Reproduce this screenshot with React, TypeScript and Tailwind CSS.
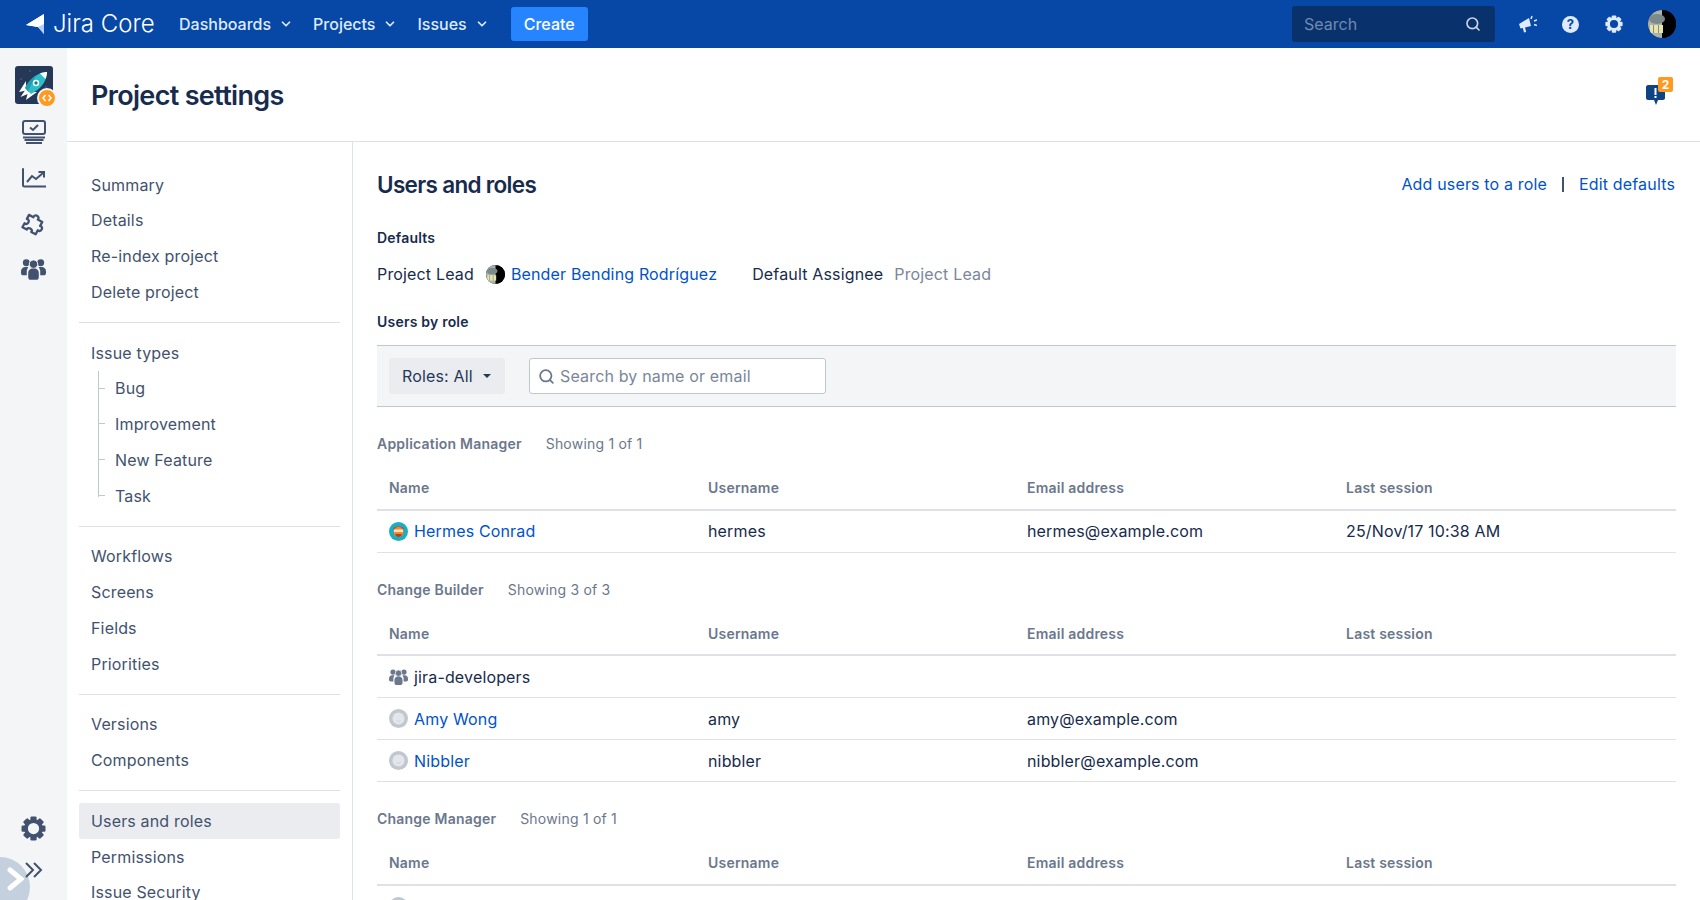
import { ChevronDown, Search } from 'lucide-react'
import type { ReactNode } from 'react'

const navGroups: string[][] = [
  ['Summary', 'Details', 'Re-index project', 'Delete project'],
  ['Issue types'],
  ['Workflows', 'Screens', 'Fields', 'Priorities'],
  ['Versions', 'Components'],
  ['Users and roles', 'Permissions', 'Issue Security'],
]
const issueTypes = ['Bug', 'Improvement', 'New Feature', 'Task']

type Member = { name: string; kind: 'hermes' | 'group' | 'blank'; username?: string; email?: string; session?: string }

const sections: { role: string; showing: string; members: Member[] }[] = [
  {
    role: 'Application Manager',
    showing: 'Showing 1 of 1',
    members: [
      { name: 'Hermes Conrad', kind: 'hermes', username: 'hermes', email: 'hermes@example.com', session: '25/Nov/17 10:38 AM' },
    ],
  },
  {
    role: 'Change Builder',
    showing: 'Showing 3 of 3',
    members: [
      { name: 'jira-developers', kind: 'group' },
      { name: 'Amy Wong', kind: 'blank', username: 'amy', email: 'amy@example.com' },
      { name: 'Nibbler', kind: 'blank', username: 'nibbler', email: 'nibbler@example.com' },
    ],
  },
  {
    role: 'Change Manager',
    showing: 'Showing 1 of 1',
    members: [{ name: '', kind: 'blank' }],
  },
]

const Gear = ({ size, color }: { size: number; color: string }) => (
  <svg width={size} height={size} viewBox="0 0 24 24" fill="none">
    {[0, 45, 90, 135, 180, 225, 270, 315].map((a) => (
      <rect key={a} x="9" y="0.5" width="6" height="5" rx="1.2" fill={color} transform={`rotate(${a} 12 12)`} />
    ))}
    <circle cx="12" cy="12" r="7.2" stroke={color} strokeWidth="3.6" />
  </svg>
)

const People = ({ size, color }: { size: number; color: string }) => (
  <svg width={size} height={size} viewBox="0 0 26 24" fill={color}>
    <circle cx="5.5" cy="6" r="3.6" />
    <circle cx="20.5" cy="6" r="3.6" />
    <path d="M0 15c0-3 2-4.6 4.5-4.6h3L6 14v5H2.4C1 19 0 18 0 16.6z" />
    <path d="M26 15c0-3-2-4.6-4.5-4.6h-3L20 14v5h3.6c1.4 0 2.4-1 2.4-2.4z" />
    <circle cx="13" cy="7.5" r="4.4" stroke="#f4f5f7" strokeWidth="1" />
    <path d="M7.5 16.5c0-2.8 2-4.5 4.5-4.5h2c2.500 0 4.500 1.700 4.500 4.500v4.500c0 1.700-1 2.700-2.700 2.700h-5.600c-1.700 0-2.700-1-2.700-2.700z" />
  </svg>
)

const Rocket = () => (
  <svg width="38" height="38" viewBox="0 0 38 38">
    <rect width="38" height="38" rx="3" fill="#253858" />
    <circle cx="6" cy="13" r="0.8" fill="#5e6c84" />
    <circle cx="15" cy="5" r="0.8" fill="#5e6c84" />
    <circle cx="31" cy="21" r="0.8" fill="#5e6c84" />
    <path d="M11 15 L4 26 L11 24.500 Z" fill="#ffffff" />
    <path d="M22 26 L11 34 L13 26 Z" fill="#ffffff" />
    <path d="M11 23 L5.500 31 L15 27 Z" fill="#ffffff" />
    <path d="M32 6 C24 6 15 12 10 22 L16 28 C26 23 32 15 32 6 Z" fill="#2bbdc9" />
    <path d="M10 22 C13 16 17 12 21 9.500 L13 25 Z" fill="#1f9eaf" />
    <path d="M32 6 C30 6 27.500 6.500 25 7.500 L30.500 13 C31.500 10.500 32 8 32 6 Z" fill="#ffffff" />
    <circle cx="21" cy="17" r="3.200" fill="#ffffff" />
    <circle cx="21" cy="17" r="1.700" fill="#0a7e8c" />
  </svg>
)

const BenderAvatar = ({ size }: { size: number }) => (
  <svg width={size} height={size} viewBox="0 0 28 28">
    <defs>
      <clipPath id={`bender-${size}`}>
        <circle cx="14" cy="14" r="14" />
      </clipPath>
    </defs>
    <g clipPath={`url(#bender-${size})`}>
      <rect width="28" height="28" fill="#000000" />
      <rect width="14" height="28" fill="#a9b3b0" />
      <ellipse cx="9" cy="9" rx="8" ry="5" fill="#7d8a8c" />
      <rect x="2" y="15" width="13" height="8" fill="#e6e3ae" />
      <rect x="5" y="15" width="1" height="8" fill="#8c8f78" />
      <rect x="10" y="15" width="1" height="8" fill="#8c8f78" />
      <path d="M16 0 C22 8 22 20 15 28 L28 28 L28 0 Z" fill="#000000" />
    </g>
  </svg>
)

const HermesAvatar = () => (
  <svg width="19" height="19" viewBox="0 0 19 19">
    <circle cx="9.500" cy="9.500" r="9.500" fill="#19aec4" />
    <path d="M4 7 C4 3.500 15 3.500 15 7 Z" fill="#d9401f" />
    <circle cx="9.500" cy="10" r="5" fill="#f58a2c" />
    <rect x="5" y="7.500" width="9" height="2.500" fill="#ffe1c0" />
    <path d="M6 12 C7 16 12 16 13 12 Z" fill="#b9401c" />
  </svg>
)

const BlankAvatar = () => (
  <svg width="19" height="19" viewBox="0 0 19 19">
    <circle cx="9.500" cy="9.500" r="9.500" fill="#c1c7d0" />
    <circle cx="9.500" cy="9.500" r="6" fill="#e3e6ea" />
    <path d="M7.500 11.500 C8.500 12.500 10.500 12.500 11.500 11.500" stroke="#c1c7d0" strokeWidth="0.6" fill="none" />
  </svg>
)

const TopLink = ({ label, className }: { label: string; className: string }) => (
  <div className={`flex items-center gap-2 font-medium ${className}`}>
    {label}
    <ChevronDown size={14} strokeWidth={3} />
  </div>
)

const NavItem = ({ children, active }: { children: ReactNode; active?: boolean }) => (
  <div className={`flex h-[35.75px] items-center rounded-[3px] pl-3 ${active ? 'bg-[#ebecf0]' : ''}`}>{children}</div>
)

function TopBar() {
  return (
    <header className="flex h-12 items-center bg-[#0747a6] pl-[26px] pr-[24px] tracking-normal text-[#deebff]">
      <svg width="19" height="20" viewBox="0 0 19 20" fill="#ffffff" className="mr-[8px]">
        <path d="M18 0 L18 20 L12 13 L0 11 Z" fill="#ffffff" />
        <path d="M18 0 L0 11 L12 13 Z" fill="#ffffff" />
        <path d="M12 13 L18 20 L18 10 Z" fill="#b3cfff" />
      </svg>
      <span className="mr-[26px] w-[100px] whitespace-nowrap text-[24px] font-light leading-none text-white">Jira Core</span>
      <TopLink label="Dashboards" className="mr-[20px]" />
      <TopLink label="Projects" className="mr-[20px]" />
      <TopLink label="Issues" className="mr-[22px]" />
      <div className="flex h-[34px] w-[77px] items-center justify-center rounded-[3px] bg-[#2684ff] font-medium text-white">
        Create
      </div>
      <div className="ml-auto flex h-9 w-[203px] items-center justify-between rounded-[3px] bg-[#09326c] pl-3 pr-[14px] text-[#6f8ab3]">
        <span>Search</span>
        <Search size={16} strokeWidth={2.5} className="text-[#c7d3e6]" />
      </div>
      <svg width="18" height="18" viewBox="0 0 18 18" fill="#deebff" className="ml-[24px]">
        <path d="M0 9 L10 3 L12 11 L6 12.500 L7.200 17 L5 17.500 L3.800 13 L1.500 13.500 Z" />
        <path d="M13 1 L12 4 M15 6 L18 5 M15 9.500 L18 10.500" stroke="#deebff" strokeWidth="1.500" />
      </svg>
      <div className="ml-[25px] flex h-[17px] w-[17px] items-center justify-center rounded-full bg-[#deebff] text-[13px] font-bold leading-none text-[#0747a6]">
        ?
      </div>
      <div className="ml-[26px]">
        <Gear size={18} color="#deebff" />
      </div>
      <div className="ml-[25px]">
        <BenderAvatar size={28} />
      </div>
    </header>
  )
}

function ProjectSidebar() {
  return (
    <aside className="relative flex w-[67px] shrink-0 flex-col items-center bg-[#f4f5f7] pt-[18px]">
      <div className="relative">
        <Rocket />
        <div className="absolute -bottom-[4px] -right-[4px] flex h-5 w-5 items-center justify-center rounded-full border-2 border-[#f4f5f7] bg-[#ff991f]">
          <svg width="10" height="8" viewBox="0 0 10 8" fill="none" stroke="#ffffff" strokeWidth="1.600">
            <path d="M3.500 1 L1 4 L3.500 7 M6.500 1 L9 4 L6.500 7" />
          </svg>
        </div>
      </div>
      <svg width="24" height="24" viewBox="0 0 24 24" fill="none" stroke="#42526e" strokeWidth="2" className="mt-[16px]">
        <rect x="1" y="1" width="22" height="13" rx="2" />
        <path d="M8 7.500 L11 10 L16 5" strokeWidth="2" />
        <path d="M1 17.500 H23 M2.500 20 H21.500 M4 23 H20" strokeWidth="1.800" />
      </svg>
      <svg width="24" height="20" viewBox="0 0 24 20" fill="none" stroke="#42526e" strokeWidth="2" className="mt-[24px]">
        <path d="M1 1 V17 C1 18 1.500 18.500 2.500 18.500 H24" strokeLinecap="round" />
        <path d="M5 14 L10 8 L14 11 L21 5" />
        <path d="M16.500 4 H22 V9.500" />
      </svg>
      <svg width="25" height="25" viewBox="0 0 25 25" fill="none" stroke="#42526e" strokeWidth="2.300" strokeLinejoin="round" className="mt-[23px]">
        <g transform="rotate(28 12.500 12.500) translate(1.500 0)">
          <path d="M3 7 H8 C7 3 14 3 13 7 H18 V11.500 C22 10.500 22 17.500 18 16.500 V21 H13 C14 17.500 7 17.500 8 21 H3 V16.500 C7 17.500 7 10.500 3 11.500 Z" />
        </g>
      </svg>
      <div className="mt-[20px]">
        <People size={25} color="#42526e" />
      </div>
      <div className="mt-auto mb-[59px]">
        <Gear size={25} color="#42526e" />
      </div>
      <div className="absolute -left-[30px] top-[809px] flex h-[60px] w-[60px] items-start justify-end rounded-full bg-[#c4d0de] pr-[6px] pt-[10px]">
        <svg width="17" height="24" viewBox="0 0 17 24" fill="none" stroke="#ffffff" strokeWidth="5" strokeLinecap="round">
          <path d="M3 3 L14 12 L3 21" />
        </svg>
      </div>
      <div className="absolute bottom-[22px] left-[25px] text-[#42526e]">
        <svg width="18" height="16" viewBox="0 0 18 16" fill="none" stroke="currentColor" strokeWidth="2">
          <path d="M1 1 L8 8 L1 15 M9 1 L16 8 L9 15" />
        </svg>
      </div>
    </aside>
  )
}

function SettingsNav() {
  return (
    <nav className="h-full w-[286px] shrink-0 border-r border-[#dfe1e6] pl-3 pr-3 pt-[24.8px] text-[#42526e]">
      {navGroups.map((group, i) => (
        <div key={i} className={i > 0 ? 'mt-3 border-t border-[#dfe1e6] pt-3' : ''}>
          {group.map((item) => (
            <NavItem key={item} active={item === 'Users and roles'}>
              {item}
            </NavItem>
          ))}
          {i === 1 && (
            <div className="relative pl-[36px]">
              <div className="absolute bottom-[17px] left-[19px] top-0 w-px bg-[#c1c7d0]" />
              {issueTypes.map((t) => (
                <div key={t} className="relative flex h-[35.75px] items-center">
                  <div className="absolute -left-[17px] top-[17px] h-px w-[7px] bg-[#c1c7d0]" />
                  {t}
                </div>
              ))}
            </div>
          )}
        </div>
      ))}
    </nav>
  )
}

const tableCols = 'grid grid-cols-[319px_319px_319px_1fr] px-3'

function RoleSection({ role, showing, members }: { role: string; showing: string; members: Member[] }) {
  return (
    <section className="mt-[27px]">
      <div className="flex h-5 items-center gap-6 text-sm tracking-[0.015em] text-[#6b778c]">
        <span className="font-semibold">{role}</span>
        <span>{showing}</span>
      </div>
      <div className={`${tableCols} border-b-2 border-[#dfe1e6] pb-[10.5px] pt-6 text-sm font-semibold leading-5 tracking-[0.015em] text-[#6b778c]`}>
        <div>Name</div>
        <div>Username</div>
        <div>Email address</div>
        <div>Last session</div>
      </div>
      {members.map((m, i) => (
        <div key={i} className={`${tableCols} h-[42px] items-center border-b border-[#dfe1e6]`}>
          <div className="flex items-center gap-[6px]">
            {m.kind === 'hermes' && <HermesAvatar />}
            {m.kind === 'blank' && <BlankAvatar />}
            {m.kind === 'group' && <People size={19} color="#6b778c" />}
            {m.kind === 'group' ? <span>{m.name}</span> : <span className="text-[#0052cc]">{m.name}</span>}
          </div>
          <div>{m.username}</div>
          <div>{m.email}</div>
          <div>{m.session}</div>
        </div>
      ))}
    </section>
  )
}

function UsersAndRoles() {
  return (
    <main className="min-w-0 flex-1 pl-6 pr-[24px] pt-[27px] text-[#172b4d]">
      <div className="flex h-8 items-center justify-between">
        <h2 className="text-[22.5px] font-semibold tracking-[-0.03em]">Users and roles</h2>
        <div className="flex items-center pb-[2px] pr-[1px] text-[#0052cc]">
          <span>Add users to a role</span>
          <span className="mx-[15px] h-[15px] w-[2px] bg-[#42526e]" />
          <span>Edit defaults</span>
        </div>
      </div>
      <div className="mt-[27px] h-5 text-sm font-semibold leading-5 tracking-[0.015em]">Defaults</div>
      <div className="mt-[14px] flex h-6 items-center">
        <span>Project Lead</span>
        <span className="ml-3 mr-[6px]">
          <BenderAvatar size={19} />
        </span>
        <span className="text-[#0052cc]">Bender Bending Rodríguez</span>
        <span className="ml-[35px]">Default Assignee</span>
        <span className="ml-[11px] text-[#7a869a]">Project Lead</span>
      </div>
      <div className="mt-[26px] h-5 text-sm font-semibold leading-5 tracking-[0.015em]">Users by role</div>
      <div className="mt-[13px] flex h-[62px] items-center border-y border-[#c1c7d0] bg-[#f4f5f7] pl-3">
        <div className="flex h-9 w-[116px] items-center rounded-[3px] bg-[#ebecf0] pl-[13px] text-[#253858]">
          Roles: All
          <span className="ml-[10px] h-0 w-0 border-x-[4px] border-t-[4px] border-x-transparent border-t-[#253858]" />
        </div>
        <div className="ml-6 flex h-9 w-[297px] items-center rounded-[3px] border border-[#c1c7d0] bg-white pl-2 text-[#7a869a]">
          <Search size={17} strokeWidth={2.5} className="mr-[5px] text-[#6b778c]" />
          Search by name or email
        </div>
      </div>
      {sections.map((s) => (
        <RoleSection key={s.role} {...s} />
      ))}
    </main>
  )
}

export default function App() {
  return (
    <div className="flex h-[900px] flex-col overflow-hidden bg-white text-base tracking-[0.01em] [font-family:Inter,sans-serif]">
      <TopBar />
      <div className="flex min-h-0 flex-1">
        <ProjectSidebar />
        <div className="flex min-w-0 flex-1 flex-col">
          <div className="flex h-[94px] shrink-0 items-center justify-between border-b border-[#dfe1e6] pl-6 pr-[35px] pt-[4px]">
            <h1 className="text-[27px] font-semibold tracking-[-0.025em] text-[#172b4d]">Project settings</h1>
            <div className="relative mb-[3px] h-5 w-[19px]">
              <svg width="19" height="20" viewBox="0 0 19 20" fill="#0f4384">
                <path d="M2 0 H17 C18 0 19 1 19 2 V13 C19 14 18 15 17 15 H12 L10 20 L8 15 H2 C1 15 0 14 0 13 V2 C0 1 1 0 2 0 Z" />
                <rect x="8.500" y="3" width="2" height="7" fill="#ffffff" />
                <rect x="8.500" y="11" width="2" height="2" fill="#ffffff" />
              </svg>
              <div className="absolute -right-[8px] -top-[8px] flex h-[15px] w-[15px] items-center justify-center rounded-[2px] bg-[#ff991f] text-[12px] font-bold leading-none text-white">
                2
              </div>
            </div>
          </div>
          <div className="flex min-h-0 flex-1">
            <SettingsNav />
            <UsersAndRoles />
          </div>
        </div>
      </div>
    </div>
  )
}
